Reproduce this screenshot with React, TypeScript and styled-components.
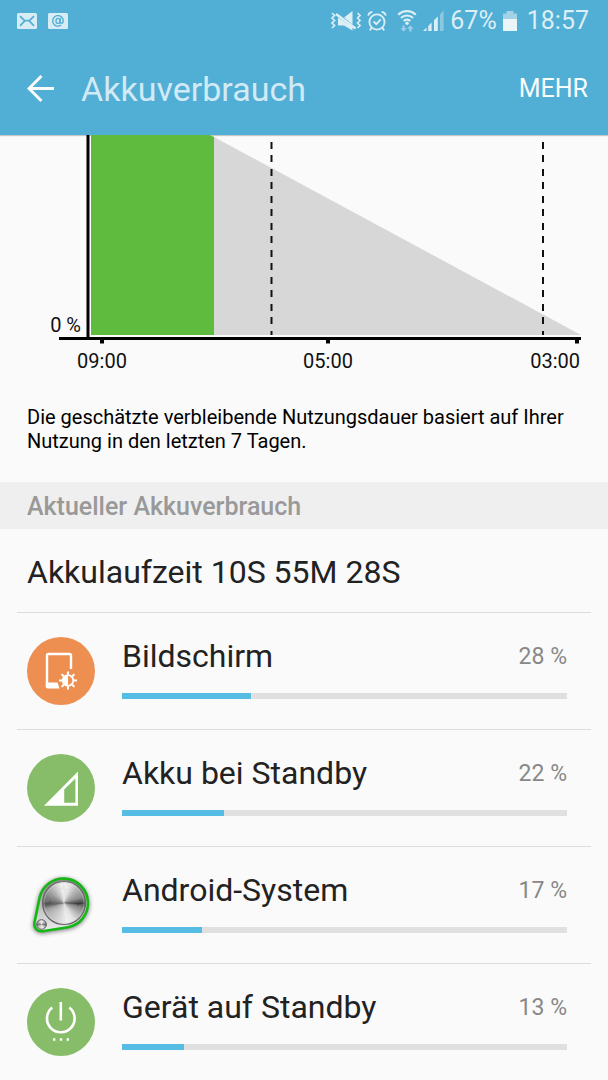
import React from "react";
import styled, { createGlobalStyle } from "styled-components";

const GlobalStyle = createGlobalStyle`
  *, *::before, *::after { box-sizing: border-box; }
  body {
    margin: 0;
    background: #fafafa;
    color: #222;
    font-family: Roboto, "Liberation Sans", sans-serif;
  }
  h1, h2, p, ul { margin: 0; padding: 0; font-weight: 400; }
`;

const Screen = styled.div`
  min-height: 100vh;
`;

const TopArea = styled.header`
  background: #51aed5;
  box-shadow: 0 1px 1px rgba(0, 0, 0, 0.2);
`;

const StatusBar = styled.div`
  display: flex;
  align-items: center;
  justify-content: space-between;
  height: 41px;
  padding: 0 19px 0 17px;
  color: #dceef6;
  font-size: 25px;
  line-height: 32px;
`;

const StatusGroup = styled.div<{ $gap: number }>`
  display: flex;
  align-items: center;
  gap: ${(p) => p.$gap}px;
`;

const Glyph = styled.svg`
  display: block;
  flex: none;
`;

const AppBar = styled.div`
  display: flex;
  align-items: center;
  height: 94px;
  padding: 2px 20px 0 27px;
`;

const BarButton = styled.button`
  flex: none;
  padding: 0;
  border: 0;
  background: none;
  color: #fafdfe;
  font: inherit;
  font-size: 25px;
  line-height: 32px;
`;

const Title = styled.h1`
  flex: 1;
  padding-left: 27px;
  color: #d2eaf4;
  font-size: 34px;
  line-height: 40px;
`;

const Chart = styled.svg`
  display: block;
  width: 100%;
  height: auto;
  text {
    font-size: 20px;
    fill: #111;
  }
`;

const Note = styled.p`
  padding: 23px 27px 29px;
  color: #000;
  font-size: 20px;
  line-height: 24px;
`;

const SectionTitle = styled.h2`
  padding: 9px 27px 6px;
  background: #efefef;
  color: #999;
  font-size: 25px;
  font-weight: 500;
  line-height: 32px;
`;

const Runtime = styled.p`
  padding: 23px 27px 20px;
  font-size: 32px;
  line-height: 40px;
`;

const UsageList = styled.ul`
  margin: 0 17px;
  list-style: none;
`;

const UsageRow = styled.li`
  display: flex;
  gap: 27px;
  height: 117px;
  padding: 24px 24px 0 10px;
  border-top: 1px solid #dcdcdc;
`;

const UsageBody = styled.div`
  flex: 1;
  min-width: 0;
`;

const UsageHead = styled.div`
  display: flex;
  justify-content: space-between;
  margin-bottom: 16px;
`;

const UsageName = styled.span`
  font-size: 32px;
  line-height: 38px;
`;

const UsageValue = styled.span`
  color: #888;
  font-size: 23px;
  line-height: 40px;
`;

const Track = styled.div`
  height: 6px;
  background: #e0e0e0;
`;

const Fill = styled.div`
  height: 100%;
  background: #55bce4;
`;

const MailIcon = () => (
  <Glyph width="20" height="16" viewBox="0 0 20 16">
    <rect width="20" height="16" rx="1.5" fill="#d8ecf5" />
    <path d="M3 3.2 7.6 7.6H12.4L17 3.2M3 12.8 7.6 8.2M17 12.8 12.4 8.2" fill="none" stroke="#51aed5" strokeWidth="1.7" />
  </Glyph>
);

const AtIcon = () => (
  <Glyph width="20" height="16" viewBox="0 0 20 16">
    <rect width="20" height="16" rx="1.5" fill="#d8ecf5" />
    <g fill="none" stroke="#51aed5" strokeWidth="1.3">
      <path d="M13.2 12.1A5.3 5.3 0 1 1 15.3 7.6C15.3 9.6 14.3 10.4 13.3 10.4 12.3 10.4 12 9.7 12.1 8.8L12.5 5.3" />
      <ellipse cx="10" cy="7.9" rx="2" ry="2.5" />
    </g>
  </Glyph>
);

const MuteIcon = () => (
  <Glyph width="30" height="22" viewBox="0 0 30 22">
    <path d="M13 7.500 21.500 1V14.500ZM7 7.500V15.500H13L21.500 20.500V17Z" fill="#dceef6" />
    <path d="M5 4 24.500 18.500" stroke="#dceef6" strokeWidth="2.600" />
    <path d="M1 3 3.600 5.500 1 8 3.600 10.500 1 13 3.600 15.500 1 18M26.500 3 29 5.500 26.500 8 29 10.500 26.500 13 29 15.500 26.500 18" fill="none" stroke="#dceef6" strokeWidth="1.600" />
  </Glyph>
);

const AlarmIcon = () => (
  <Glyph width="20" height="22" viewBox="0 0 20 22">
    <g fill="none" stroke="#dceef6" strokeWidth="1.8">
      <circle cx="10" cy="12" r="7.6" />
      <path d="M6.6 11.5 9.3 14.2 13.8 9.4M1.2 5.6C1.6 3.6 3 2.2 5.4 1.9M18.8 5.6C18.4 3.6 17 2.2 14.6 1.9M4.6 17.8 2.8 20.6M15.4 17.8 17.2 20.6" />
    </g>
  </Glyph>
);

const WifiIcon = () => (
  <Glyph width="20" height="22" viewBox="0 0 20 22">
    <g fill="none" stroke="#dceef6" strokeWidth="2.2">
      <path d="M1.200 4.800A12.400 12.400 0 0 1 18.800 4.800M4 8A8.400 8.400 0 0 1 16 8M6.700 11A4.600 4.600 0 0 1 13.300 11" />
    </g>
    <circle cx="10" cy="13.2" r="1.7" fill="#dceef6" />
    <path d="M5.500 15.500H7.700V18.200H9.800L6.600 21.600 3.400 18.200H5.500ZM12.300 21.400H14.500V18.700H16.600L13.400 15.300 10.200 18.700H12.300Z" fill="#9dcfe6" />
  </Glyph>
);

const SignalIcon = () => (
  <Glyph width="21" height="22" viewBox="0 0 21 22">
    <path d="M0 21 3.500 17.500V21ZM5.200 21V16L8.600 12.600V21ZM11 21V10.200L14.800 6.400V21Z" fill="#dceef6" />
    <path d="M17 21V4.200L20.600 0.600V21Z" fill="#8cc8e2" />
  </Glyph>
);

const BatteryIcon = () => (
  <Glyph width="14" height="22" viewBox="0 0 14 22">
    <path d="M0 3.5H3.5V1H10.5V3.5H14V9H0Z" fill="#a3d2e7" />
    <path d="M0 9H14V21H0Z" fill="#eaf5fa" />
  </Glyph>
);

const BackIcon = () => (
  <Glyph width="27" height="28" viewBox="0 0 27 28">
    <path d="M14.5 1 2 13.500 14.500 26M2 13.500H27" fill="none" stroke="#fafdfe" strokeWidth="3" />
  </Glyph>
);

const ScreenIcon = () => (
  <Glyph width="68" height="68" viewBox="0 0 68 68">
    <circle cx="34" cy="34" r="34" fill="#ee8f52" />
    <path d="M44 32V18.5Q44 17 42.500 17H21.500Q20 17 20 18.500V50" fill="none" stroke="#fff" strokeWidth="2.4" />
    <path d="M18.800 45.600H30.500L32.500 51.600H20.900Q18.800 51.600 18.800 49.600Z" fill="#fff" />
    <circle cx="41" cy="43.500" r="5.300" fill="none" stroke="#fff" strokeWidth="1.800" />
    <path d="M41 38.200V48.800A5.300 5.300 0 0 1 41 38.200Z" fill="#fff" />
    <path
      d="M41 34.500V37.500M41 49.500V52.500M32 43.500H35M47 43.500H50M34.600 37.100 36.700 39.200M45.300 47.800 47.400 49.900M34.600 49.900 36.700 47.800M45.300 39.200 47.400 37.100"
      stroke="#fff"
      strokeWidth="2"
    />
  </Glyph>
);

const CellIcon = () => (
  <Glyph width="68" height="68" viewBox="0 0 68 68">
    <circle cx="34" cy="34" r="34" fill="#87bd68" />
    <path d="M17 51.700 51 17.500V51.700ZM37.200 35.600V48.700H48.400V24.400Z" fill="#fff" fillRule="evenodd" />
  </Glyph>
);

const PowerIcon = () => (
  <Glyph width="68" height="68" viewBox="0 0 68 68">
    <circle cx="34" cy="34" r="34" fill="#87bd68" />
    <path d="M25.300 19.600A13.800 13.800 0 1 0 42.300 19.600M33.800 14V32.500" fill="none" stroke="#fff" strokeWidth="2.600" />
    <path d="M26 51.500H28.400M32.800 51.500H35.200M39.600 51.500H42" stroke="#fff" strokeWidth="2.400" />
  </Glyph>
);

/* Brightness stops of brushed metal, as [angle clockwise from the right, grey level]. */
const METAL: [number, number][] = [
  [0, 55], [12, 130], [35, 180], [60, 230], [80, 240], [105, 215], [145, 180],
  [160, 150], [174, 80], [190, 115], [215, 160], [240, 205], [262, 245],
  [285, 235], [310, 185], [340, 140], [361, 55],
];

const metalAt = (angle: number) => {
  const i = METAL.findIndex(([a]) => a > angle);
  const [a0, v0] = METAL[i - 1];
  const [a1, v1] = METAL[i];
  return Math.round(v0 + ((v1 - v0) * (angle - a0)) / (a1 - a0));
};

const MetalDisc = ({ cx, cy, r }: { cx: number; cy: number; r: number }) => (
  <g>
    {Array.from({ length: 90 }, (_, i) => {
      const from = (i * 4 * Math.PI) / 180;
      const to = ((i * 4 + 5) * Math.PI) / 180;
      const v = metalAt(i * 4);
      return (
        <path
          key={i}
          d={`M${cx} ${cy}L${cx + r * Math.cos(from)} ${cy + r * Math.sin(from)}A${r} ${r} 0 0 1 ${cx + r * Math.cos(to)} ${cy + r * Math.sin(to)}Z`}
          fill={`rgb(${v},${v},${v})`}
        />
      );
    })}
  </g>
);

const HULL = "M7.4 52.3L12.500 27.100A24.500 24.500 0 1 1 40.800 56.200L15.400 60.200A7 7 0 0 1 7.400 52.300Z";

const SystemIcon = () => (
  <Glyph width="68" height="68" viewBox="0 0 68 68">
    <defs>
      <filter id="soft" x="-20%" y="-20%" width="140%" height="140%">
        <feGaussianBlur stdDeviation="2" />
      </filter>
      <linearGradient id="plate" x1="0" y1="0" x2="0" y2="1">
        <stop offset="0" stopColor="#888" />
        <stop offset="0.5" stopColor="#bbb" />
        <stop offset="1" stopColor="#eee" />
      </linearGradient>
    </defs>
    <path d={HULL} transform="translate(0 1)" fill="#333" stroke="#333" strokeWidth="3" filter="url(#soft)" opacity="0.6" />
    <path d={HULL} fill="url(#plate)" stroke="#14b814" strokeWidth="2.600" />
    <MetalDisc cx={37} cy={32} r={21.5} />
    <circle cx="37" cy="32" r="21.500" fill="none" stroke="#666" strokeWidth="1.200" />
    <circle cx="37" cy="32" r="20" fill="none" stroke="#ddd" strokeWidth="0.800" opacity="0.5" />
    <MetalDisc cx={14.500} cy={53.500} r={4.800} />
    <circle cx="14.500" cy="53.500" r="4.800" fill="none" stroke="#555" strokeWidth="1" />
  </Glyph>
);

const BatteryChart = () => (
  <Chart viewBox="0 0 608 247" role="img" aria-label="Akkuverlauf">
    <path d="M214 2 581 200H214Z" fill="#d7d7d7" />
    <path d="M91 0H210L214 2V200H91Z" fill="#5fbb3d" />
    <path d="M271.500 7V200M543 7V200" stroke="#111" strokeWidth="2" strokeDasharray="7 6 7 7" />
    <path d="M88 0V203" stroke="#000" strokeWidth="3" />
    <path d="M59 203.500H581" stroke="#000" strokeWidth="3" />
    <path d="M102 205V208.500M328 205V208.500M577 205V208.500" stroke="#000" strokeWidth="4" />
    <text x="81" y="197" textAnchor="end">0 %</text>
    <text x="102" y="233" textAnchor="middle">09:00</text>
    <text x="328" y="233" textAnchor="middle">05:00</text>
    <text x="580" y="233" textAnchor="end">03:00</text>
  </Chart>
);

const USAGE = [
  { name: "Bildschirm", value: "28 %", bar: 29, Icon: ScreenIcon },
  { name: "Akku bei Standby", value: "22 %", bar: 23, Icon: CellIcon },
  { name: "Android-System", value: "17 %", bar: 18, Icon: SystemIcon },
  { name: "Gerät auf Standby", value: "13 %", bar: 14, Icon: PowerIcon },
];

export default function App() {
  return (
    <Screen>
      <GlobalStyle />
      <TopArea>
        <StatusBar>
          <StatusGroup $gap={11}>
            <MailIcon />
            <AtIcon />
          </StatusGroup>
          <StatusGroup $gap={10}>
            <StatusGroup $gap={6}>
              <MuteIcon />
              <AlarmIcon />
            </StatusGroup>
            <StatusGroup $gap={6}>
              <WifiIcon />
              <SignalIcon />
              <span>67%</span>
              <BatteryIcon />
            </StatusGroup>
            <span>18:57</span>
          </StatusGroup>
        </StatusBar>
        <AppBar>
          <BarButton type="button" aria-label="Zurück">
            <BackIcon />
          </BarButton>
          <Title>Akkuverbrauch</Title>
          <BarButton type="button">MEHR</BarButton>
        </AppBar>
      </TopArea>
      <main>
        <BatteryChart />
        <Note>
          Die geschätzte verbleibende Nutzungsdauer basiert auf Ihrer Nutzung in den letzten 7 Tagen.
        </Note>
        <SectionTitle>Aktueller Akkuverbrauch</SectionTitle>
        <Runtime>Akkulaufzeit 10S 55M 28S</Runtime>
        <UsageList>
          {USAGE.map(({ name, value, bar, Icon }) => (
            <UsageRow key={name}>
              <Icon />
              <UsageBody>
                <UsageHead>
                  <UsageName>{name}</UsageName>
                  <UsageValue>{value}</UsageValue>
                </UsageHead>
                <Track role="progressbar" aria-label={name} aria-valuenow={parseInt(value, 10)} aria-valuemin={0} aria-valuemax={100}>
                  <Fill style={{ width: `${bar}%` }} />
                </Track>
              </UsageBody>
            </UsageRow>
          ))}
        </UsageList>
      </main>
    </Screen>
  );
}
